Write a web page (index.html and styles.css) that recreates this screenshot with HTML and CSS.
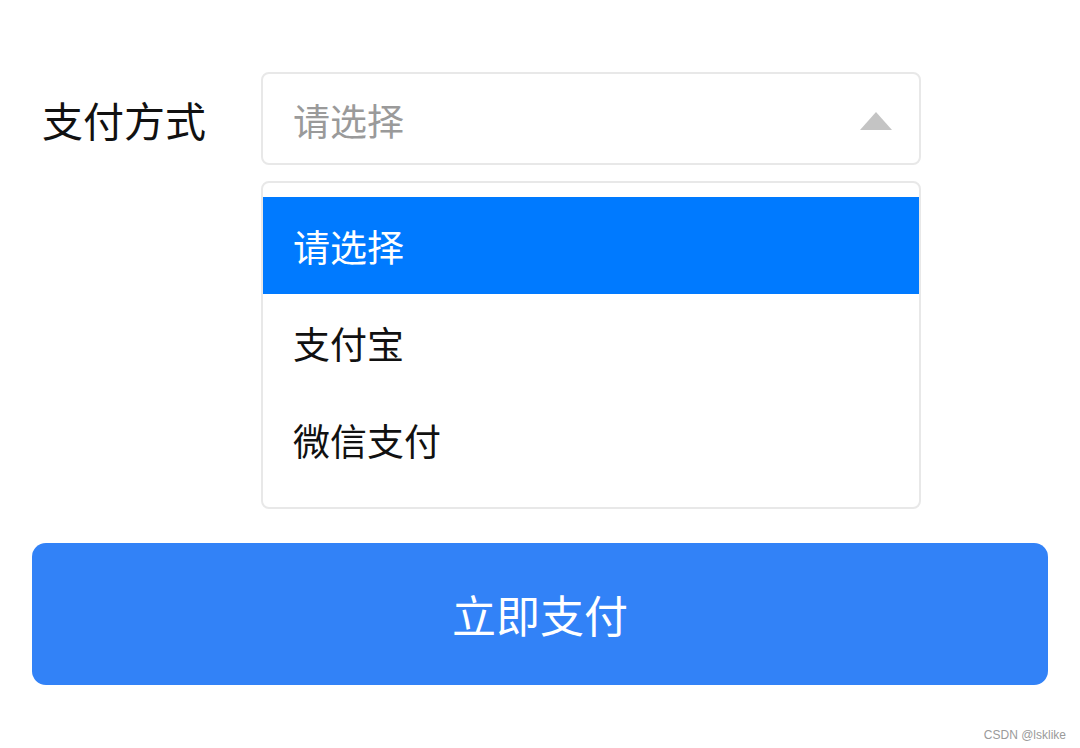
FILE: index.html
```html
<!DOCTYPE html>
<html lang="zh">
<head>
<meta charset="utf-8">
<link rel="stylesheet" href="styles.css">
</head>
<body>
<div class="page">
  <div class="form-row">
    <div class="label">支付方式</div>
    <div class="field">
      <div class="select">
        <span class="placeholder">请选择</span>
        <svg class="arrow" width="32" height="18" viewBox="0 0 32 18"><polygon points="16,0 32,18 0,18" fill="#c4c4c4"/></svg>
      </div>
      <ul class="dropdown">
        <li class="option active">请选择</li>
        <li class="option">支付宝</li>
        <li class="option">微信支付</li>
      </ul>
    </div>
  </div>
  <button class="pay">立即支付</button>
</div>
<div class="watermark">CSDN @lsklike</div>
</body>
</html>
```
FILE: styles.css
```css
html, body {
  margin: 0;
  padding: 0;
  background: #fff;
  font-family: "Noto Sans CJK SC", "Noto Sans", sans-serif;
}
.page {
  width: 1080px;
  height: 748px;
  box-sizing: border-box;
  padding: 72px 32px 0 32px;
  display: flex;
  flex-direction: column;
}
.form-row {
  display: flex;
  align-items: flex-start;
}
.label {
  width: 229px;
  padding-left: 10px;
  box-sizing: border-box;
  font-size: 41px;
  line-height: 93px;
  height: 93px;
  color: #111;
  padding-top: 1px;
}
.field {
  width: 660px;
  display: flex;
  flex-direction: column;
}
.select {
  height: 93px;
  box-sizing: border-box;
  border: 2px solid #e8e8e8;
  border-radius: 8px;
  display: flex;
  align-items: center;
  justify-content: space-between;
  padding: 0 27px 0 30px;
}
.placeholder {
  font-size: 37px;
  color: #9a9a9a;
  line-height: 1;
  margin-top: 4px;
}
.arrow {
  display: block;
  margin-top: 4px;
}
.dropdown {
  list-style: none;
  margin: 16px 0 0 0;
  padding: 14px 0 20px 0;
  height: 328px;
  box-sizing: border-box;
  border: 2px solid #e8e8e8;
  border-radius: 8px;
}
.option {
  height: 97px;
  display: flex;
  align-items: center;
  padding-left: 30px;
  font-size: 37px;
  color: #111;
}
.option.active {
  background: #007aff;
  color: #fff;
}
.pay {
  margin-top: 34px;
  width: 1016px;
  height: 142px;
  border: none;
  border-radius: 14px;
  background: #3282f7;
  color: #fff;
  font-family: "Noto Sans CJK SC", "Noto Sans", sans-serif;
  font-size: 44px;
  padding: 0;
}
.watermark {
  position: absolute;
  right: 14px;
  bottom: 6px;
  font-family: "Liberation Sans", sans-serif;
  font-size: 12px;
  color: #9a9a9a;
}
```
